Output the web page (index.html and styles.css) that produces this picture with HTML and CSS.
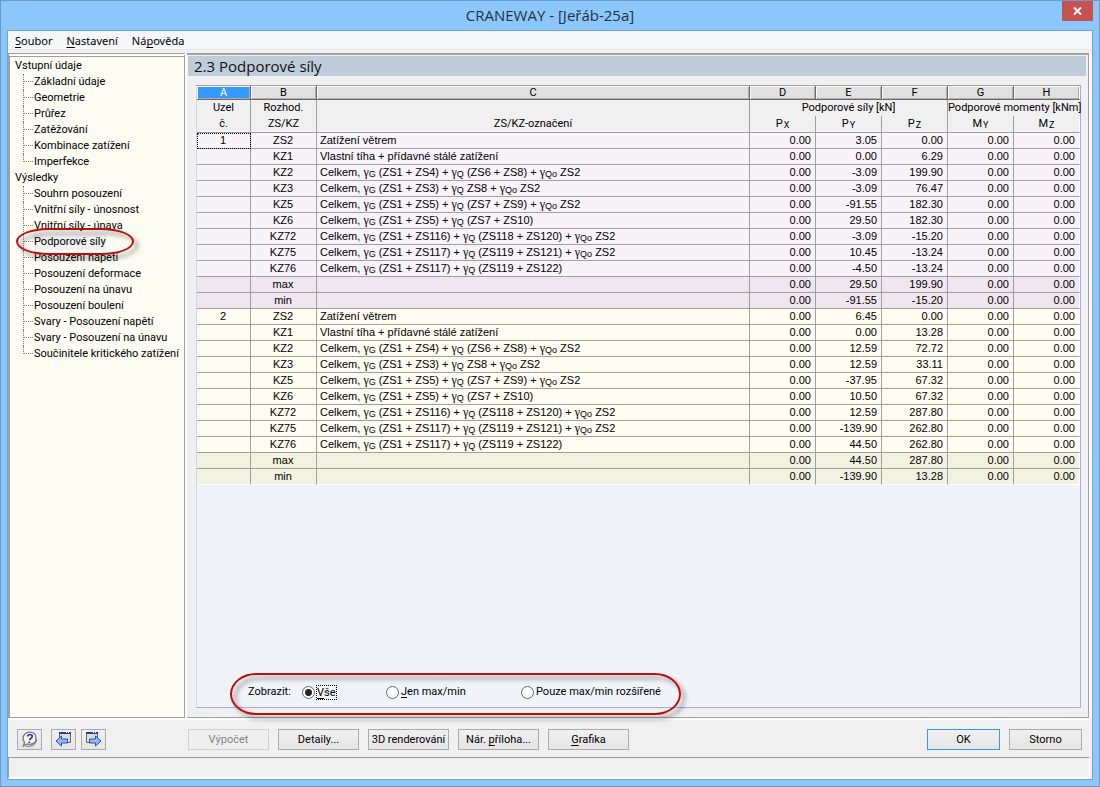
FILE: index.html
```html
<!DOCTYPE html>
<html lang="cs">
<head>
<meta charset="utf-8">
<title>CRANEWAY - [Jeřáb-25a]</title>
<link rel="stylesheet" href="styles.css">
</head>
<body>
<div class="window">
  <header class="titlebar">
    <h1 class="title">CRANEWAY - [Jeřáb-25a]</h1>
    <button class="close" type="button" aria-label="Zavřít"><svg width="9" height="8" viewBox="0 0 9 8"><path d="M1 .5 8 7.5M8 .5 1 7.5" stroke="#fff" stroke-width="1.9"/></svg></button>
  </header>
  <div class="client">
    <nav class="menubar">
      <button type="button"><u>S</u>oubor</button>
      <button type="button"><u>N</u>astavení</button>
      <button type="button">Ná<u>p</u>ověda</button>
    </nav>
    <div class="workspace">
      <nav class="tree">
        <p class="group">Vstupní údaje</p>
        <ul>
          <li><a href="#">Základní údaje</a></li>
          <li><a href="#">Geometrie</a></li>
          <li><a href="#">Průřez</a></li>
          <li><a href="#">Zatěžování</a></li>
          <li><a href="#">Kombinace zatížení</a></li>
          <li><a href="#">Imperfekce</a></li>
        </ul>
        <p class="group">Výsledky</p>
        <ul>
          <li><a href="#">Souhrn posouzení</a></li>
          <li><a href="#">Vnitřní síly - únosnost</a></li>
          <li><a href="#">Vnitřní síly - únava</a></li>
          <li class="marked"><a class="current" href="#">Podporové síly</a><span class="ring ring-item"></span></li>
          <li><a href="#">Posouzení napětí</a></li>
          <li><a href="#">Posouzení deformace</a></li>
          <li><a href="#">Posouzení na únavu</a></li>
          <li><a href="#">Posouzení boulení</a></li>
          <li><a href="#">Svary - Posouzení napětí</a></li>
          <li><a href="#">Svary - Posouzení na únavu</a></li>
          <li><a href="#">Součinitele kritického zatížení</a></li>
        </ul>
      </nav>
      <main class="panel">
        <h2 class="panel-title">2.3 Podporové síly</h2>
        <div class="sheet">
          <table>
            <colgroup><col class="c-node"><col class="c-num"><col><col class="c-num"><col class="c-num"><col class="c-num"><col class="c-num"><col class="c-num"></colgroup>
            <thead>
              <tr class="letters"><th class="active">A</th><th>B</th><th>C</th><th>D</th><th>E</th><th>F</th><th>G</th><th>H</th></tr>
              <tr class="upper"><th>Uzel</th><th>Rozhod.</th><th></th><th colspan="3">Podporové síly [kN]</th><th colspan="2">Podporové momenty [kNm]</th></tr>
              <tr class="lower"><th>č.</th><th>ZS/KZ</th><th>ZS/KZ-označení</th><th>P<small>X</small></th><th>P<small>Y</small></th><th>P<small>Z</small></th><th>M<small>Y</small></th><th>M<small>Z</small></th></tr>
            </thead>
            <tbody class="node-a">
              <tr><td class="focus">1</td><td>ZS2</td><td>Zatížení větrem</td><td>0.00</td><td>3.05</td><td>0.00</td><td>0.00</td><td>0.00</td></tr>
              <tr><td></td><td>KZ1</td><td>Vlastní tíha + přídavné stálé zatížení</td><td>0.00</td><td>0.00</td><td>6.29</td><td>0.00</td><td>0.00</td></tr>
              <tr><td></td><td>KZ2</td><td>Celkem, <i>γ</i><small>G</small> (ZS1 + ZS4) + <i>γ</i><small>Q</small> (ZS6 + ZS8) + <i>γ</i><small>Qo</small> ZS2</td><td>0.00</td><td>-3.09</td><td>199.90</td><td>0.00</td><td>0.00</td></tr>
              <tr><td></td><td>KZ3</td><td>Celkem, <i>γ</i><small>G</small> (ZS1 + ZS3) + <i>γ</i><small>Q</small> ZS8 + <i>γ</i><small>Qo</small> ZS2</td><td>0.00</td><td>-3.09</td><td>76.47</td><td>0.00</td><td>0.00</td></tr>
              <tr><td></td><td>KZ5</td><td>Celkem, <i>γ</i><small>G</small> (ZS1 + ZS5) + <i>γ</i><small>Q</small> (ZS7 + ZS9) + <i>γ</i><small>Qo</small> ZS2</td><td>0.00</td><td>-91.55</td><td>182.30</td><td>0.00</td><td>0.00</td></tr>
              <tr><td></td><td>KZ6</td><td>Celkem, <i>γ</i><small>G</small> (ZS1 + ZS5) + <i>γ</i><small>Q</small> (ZS7 + ZS10)</td><td>0.00</td><td>29.50</td><td>182.30</td><td>0.00</td><td>0.00</td></tr>
              <tr><td></td><td>KZ72</td><td>Celkem, <i>γ</i><small>G</small> (ZS1 + ZS116) + <i>γ</i><small>Q</small> (ZS118 + ZS120) + <i>γ</i><small>Qo</small> ZS2</td><td>0.00</td><td>-3.09</td><td>-15.20</td><td>0.00</td><td>0.00</td></tr>
              <tr><td></td><td>KZ75</td><td>Celkem, <i>γ</i><small>G</small> (ZS1 + ZS117) + <i>γ</i><small>Q</small> (ZS119 + ZS121) + <i>γ</i><small>Qo</small> ZS2</td><td>0.00</td><td>10.45</td><td>-13.24</td><td>0.00</td><td>0.00</td></tr>
              <tr><td></td><td>KZ76</td><td>Celkem, <i>γ</i><small>G</small> (ZS1 + ZS117) + <i>γ</i><small>Q</small> (ZS119 + ZS122)</td><td>0.00</td><td>-4.50</td><td>-13.24</td><td>0.00</td><td>0.00</td></tr>
              <tr class="total"><td></td><td>max</td><td></td><td>0.00</td><td>29.50</td><td>199.90</td><td>0.00</td><td>0.00</td></tr>
              <tr class="total"><td></td><td>min</td><td></td><td>0.00</td><td>-91.55</td><td>-15.20</td><td>0.00</td><td>0.00</td></tr>
            </tbody>
            <tbody class="node-b">
              <tr><td>2</td><td>ZS2</td><td>Zatížení větrem</td><td>0.00</td><td>6.45</td><td>0.00</td><td>0.00</td><td>0.00</td></tr>
              <tr><td></td><td>KZ1</td><td>Vlastní tíha + přídavné stálé zatížení</td><td>0.00</td><td>0.00</td><td>13.28</td><td>0.00</td><td>0.00</td></tr>
              <tr><td></td><td>KZ2</td><td>Celkem, <i>γ</i><small>G</small> (ZS1 + ZS4) + <i>γ</i><small>Q</small> (ZS6 + ZS8) + <i>γ</i><small>Qo</small> ZS2</td><td>0.00</td><td>12.59</td><td>72.72</td><td>0.00</td><td>0.00</td></tr>
              <tr><td></td><td>KZ3</td><td>Celkem, <i>γ</i><small>G</small> (ZS1 + ZS3) + <i>γ</i><small>Q</small> ZS8 + <i>γ</i><small>Qo</small> ZS2</td><td>0.00</td><td>12.59</td><td>33.11</td><td>0.00</td><td>0.00</td></tr>
              <tr><td></td><td>KZ5</td><td>Celkem, <i>γ</i><small>G</small> (ZS1 + ZS5) + <i>γ</i><small>Q</small> (ZS7 + ZS9) + <i>γ</i><small>Qo</small> ZS2</td><td>0.00</td><td>-37.95</td><td>67.32</td><td>0.00</td><td>0.00</td></tr>
              <tr><td></td><td>KZ6</td><td>Celkem, <i>γ</i><small>G</small> (ZS1 + ZS5) + <i>γ</i><small>Q</small> (ZS7 + ZS10)</td><td>0.00</td><td>10.50</td><td>67.32</td><td>0.00</td><td>0.00</td></tr>
              <tr><td></td><td>KZ72</td><td>Celkem, <i>γ</i><small>G</small> (ZS1 + ZS116) + <i>γ</i><small>Q</small> (ZS118 + ZS120) + <i>γ</i><small>Qo</small> ZS2</td><td>0.00</td><td>12.59</td><td>287.80</td><td>0.00</td><td>0.00</td></tr>
              <tr><td></td><td>KZ75</td><td>Celkem, <i>γ</i><small>G</small> (ZS1 + ZS117) + <i>γ</i><small>Q</small> (ZS119 + ZS121) + <i>γ</i><small>Qo</small> ZS2</td><td>0.00</td><td>-139.90</td><td>262.80</td><td>0.00</td><td>0.00</td></tr>
              <tr><td></td><td>KZ76</td><td>Celkem, <i>γ</i><small>G</small> (ZS1 + ZS117) + <i>γ</i><small>Q</small> (ZS119 + ZS122)</td><td>0.00</td><td>44.50</td><td>262.80</td><td>0.00</td><td>0.00</td></tr>
              <tr class="total"><td></td><td>max</td><td></td><td>0.00</td><td>44.50</td><td>287.80</td><td>0.00</td><td>0.00</td></tr>
              <tr class="total"><td></td><td>min</td><td></td><td>0.00</td><td>-139.90</td><td>13.28</td><td>0.00</td><td>0.00</td></tr>
            </tbody>
          </table>
          <div class="filter" role="radiogroup" aria-labelledby="filter-name">
            <span id="filter-name">Zobrazit:</span>
            <label><input type="radio" name="show" checked><span class="focus-text"><u>V</u>še</span></label>
            <label><input type="radio" name="show"><span><u>J</u>en max/min</span></label>
            <label><input type="radio" name="show"><span>Pouze max/min rozšířené</span></label>
            <span class="ring ring-filter"></span>
          </div>
        </div>
      </main>
    </div>
    <footer class="actions">
      <div class="tools">
        <button class="btn tool" type="button" aria-label="Nápověda">
          <svg width="17" height="17" viewBox="0 0 17 17"><path d="M5 15.500c5 .5 10-2 10.500-7" fill="none" stroke="#999" stroke-width="1.500"/><path d="M8.700 1.200c4 0 6.300 2.500 6.300 6s-2.300 6.100-6.300 6.100c-.9 0-1.700-.1-2.400-.4L2.400 15l1.200-3.600C2.500 10.300 2 9 2 7.300c0-3.600 2.700-6.100 6.700-6.100z" fill="#f6f6f6" stroke="#777" stroke-width="1.300"/><path d="M6.500 5.500C6.700 4.200 7.700 3.600 8.900 3.600c1.500 0 2.400.7 2.300 1.900-.1 1.700-2.200 1.800-2.600 3.600M8.300 10.400v1.600" fill="none" stroke="#2c4aa8" stroke-width="1.900"/></svg>
        </button>
        <span class="pair">
          <button class="btn tool" type="button" aria-label="Předchozí">
            <svg width="17" height="17" viewBox="0 0 17 17"><path d="M4.500 1.500h11v10h-11z" fill="#dedede" stroke="#666"/><path d="M4 1h12v2H4z" fill="#27408b"/><path d="M11 1h1v1h-1zM13 1h1v1h-1z" fill="#fff"/><path d="M1 10 6.500 5v3h6v4h-6v3z" fill="#8fb8f5" stroke="#2f50a5"/></svg>
          </button>
          <button class="btn tool" type="button" aria-label="Další">
            <svg width="17" height="17" viewBox="0 0 17 17"><path d="M1.500 1.500h11v10h-11z" fill="#dedede" stroke="#666"/><path d="M1 1h12v2H1z" fill="#27408b"/><path d="M8 1h1v1H8zM10 1h1v1h-1z" fill="#fff"/><path d="M16 10 10.500 5v3h-6v4h6v3z" fill="#8fb8f5" stroke="#2f50a5"/></svg>
          </button>
        </span>
      </div>
      <div class="commands">
        <button class="btn" type="button" disabled>Výpočet</button>
        <button class="btn" type="button">Detaily...</button>
        <button class="btn" type="button">3D renderování</button>
        <button class="btn" type="button">Nár. <u>p</u>říloha...</button>
        <button class="btn" type="button"><u>G</u>rafika</button>
      </div>
      <div class="decision">
        <button class="btn default" type="button">OK</button>
        <button class="btn" type="button">Storno</button>
      </div>
    </footer>
    <div class="statusbar"></div>
  </div>
</div>
</body>
</html>
```
FILE: styles.css
```css
* { box-sizing: border-box; }
body, h1, h2, p, ul { margin: 0; padding: 0; }
body {
  font-family: Roboto, "Open Sans", sans-serif;
  font-size: 11px;
  line-height: 16px;
  color: #000;
}
button, input { font: inherit; color: inherit; margin: 0; }
a { color: inherit; text-decoration: none; }
u { text-underline-offset: 2px; text-decoration-skip-ink: none; }

.window {
  min-height: 100vh;
  display: flex;
  flex-direction: column;
  background: #8cc7fb;
  border: 1px solid #6b9ac6;
  padding: 0 6px 6px;
}
.titlebar {
  height: 29px;
  display: grid;
  grid-template-columns: 1fr auto 1fr;
  align-items: start;
}
.title {
  grid-column: 2;
  font-family: "Open Sans", sans-serif;
  font-size: 15px;
  font-weight: 400;
  line-height: 29px;
  color: #24313f;
}
.close {
  justify-self: end;
  display: flex;
  align-items: center;
  justify-content: center;
  width: 31px;
  height: 20px;
  padding: 0;
  border: 0;
  background: #c75050;
}

.client {
  flex: 1;
  display: flex;
  flex-direction: column;
  background: #f0f0f0;
  border: 1px solid #70a5d4;
}
.menubar {
  display: flex;
  gap: 14px;
  height: 19px;
  padding: 0 7px;
  margin-bottom: 3px;
  background: #f5f6f7;
  border-bottom: 1px solid #e8e8e8;
  font-family: "Noto Sans", sans-serif;
}
.menubar button {
  padding: 2px 0 0;
  border: 0;
  background: none;
  line-height: 16px;
}

.workspace {
  flex: 1;
  display: grid;
  grid-template-columns: 177px 1fr;
  gap: 2px;
  padding-right: 3px;
  background: #fff;
  border-bottom: 2px solid #fff;
}
.tree {
  background: #fcfcf3;
  border: 1px solid #a0a0a0;
  border-left-width: 2px;
  border-top: 4px double #a0a0a0;
  padding: 1px 0 0 5px;
  white-space: nowrap;
}
.tree ul { list-style: none; padding-left: 8px; }
.tree li {
  display: flex;
  border-left: 1px dotted #808080;
}
.tree li::before {
  content: "";
  width: 9px;
  height: 7px;
  margin-right: 1px;
  border-bottom: 1px dotted #808080;
}
.tree li:last-child { border-left: 0; }
.tree li:last-child::before { border-left: 1px dotted #808080; }
.tree .marked { position: relative; }
.current { background: #f0f0f0; }

.ring {
  position: absolute;
  border: 2px solid #c00d0d;
  filter: drop-shadow(4px 4px 2px rgba(0, 0, 0, .45));
  pointer-events: none;
}
.ring-item {
  left: -8px;
  top: -6px;
  width: 118px;
  height: 27px;
  border-radius: 34px / 14px;
}
.ring-filter {
  left: -18px;
  top: -11px;
  width: 451px;
  height: 42px;
  border-radius: 26px / 21px;
}

.panel {
  display: flex;
  flex-direction: column;
  background: #f0f0f0;
  border: 1px solid #a0a0a0;
  border-left: 0;
  border-top-width: 2px;
}
.panel-title {
  margin: 1px 2px 9px 1px;
  padding-left: 6px;
  background: #bfccda;
  font-family: "Open Sans", sans-serif;
  font-size: 15px;
  font-weight: 400;
  line-height: 20px;
  color: #111;
}
.sheet {
  flex: 1;
  display: flex;
  flex-direction: column;
  justify-content: space-between;
  margin: 0 7px 9px 9px;
  background: #f0f4f9;
  border: 1px solid #a9a9ea;
  border-top-color: #a0a0a0;
  border-left-color: #ccd8ee;
}

table {
  width: 100%;
  table-layout: fixed;
  border-collapse: separate;
  border-spacing: 0;
  font-family: "Liberation Sans", Arial, sans-serif;
}
.c-node { width: 54px; }
.c-num { width: 66px; }
th, td {
  height: 16px;
  padding: 0 4px 1px 3px;
  border-right: 1px solid #a0a0a0;
  border-bottom: 1px solid #a0a0a0;
  line-height: 14px;
  white-space: nowrap;
}
th {
  padding: 0 0 1px;
  background: #f0f0f0;
  font-family: Roboto, sans-serif;
  font-weight: 400;
}
.letters th {
  height: 14px;
  padding: 0;
  line-height: 12px;
  background: #e1e1e1;
  border-color: #696969;
  box-shadow: inset 1px 1px #fff, inset -1px -1px #b0b0b0;
}
.letters .active { background: #3399ff; color: #fff; }
.upper th { border-bottom: 0; }
.lower th { height: 17px; }
tr > :last-child { border-right-color: #fff; }
tbody:last-child tr:last-child td { border-bottom-color: #fff; }
td { text-align: right; }
td:nth-child(-n+2) { text-align: center; }
td:nth-child(3) { text-align: left; }
td i {
  font-family: "Liberation Serif", serif;
  font-size: 12px;
  font-style: normal;
  line-height: 0;
}
small { font-size: 9px; line-height: 0; vertical-align: -1px; }
th small { margin-left: 1px; }
.node-a td { background: #f8f3f8; }
.node-a .total td { background: #f0e6f0; }
.node-b td { background: #fffcf1; }
.node-b .total td { background: #f2f2e0; }
.focus { outline: 1px dotted #000; outline-offset: -1px; }

.filter {
  position: relative;
  align-self: flex-start;
  display: grid;
  grid-template-columns: 54px 84px 135px auto;
  align-items: center;
  margin-left: 51px;
  padding-bottom: 7px;
}
.filter label { display: flex; align-items: center; gap: 2px; }
.filter input {
  appearance: none;
  width: 13px;
  height: 13px;
  border: 1px solid #666;
  border-radius: 50%;
  background: #fff;
}
.filter input:checked {
  background: radial-gradient(circle, #222 3px, #fff 4px);
}
.focus-text { outline: 1px dotted #000; line-height: 13px; }

.actions {
  display: grid;
  grid-template-columns: 171px 1fr auto;
  padding: 9px 10px 7px 9px;
}
.tools, .commands, .decision { display: flex; gap: 9px; }
.pair { display: flex; gap: 5px; }
.btn {
  width: 81px;
  height: 21px;
  padding: 0;
  border: 1px solid #acacac;
  background: linear-gradient(#f0f0f0, #e5e5e5);
  line-height: 19px;
  white-space: nowrap;
}
.decision .btn { width: 73px; }
.btn.tool {
  display: flex;
  align-items: center;
  justify-content: center;
  width: 25px;
}
.btn.default { border-color: #3399ff; }
.btn:disabled { color: #838383; border-color: #d0d0d0; background: #efefef; }
.statusbar {
  height: 22px;
  margin-right: 2px;
  border: 1px solid #a0a0a0;
  border-right-color: #fff;
  border-bottom: 2px solid #fff;
}
```
